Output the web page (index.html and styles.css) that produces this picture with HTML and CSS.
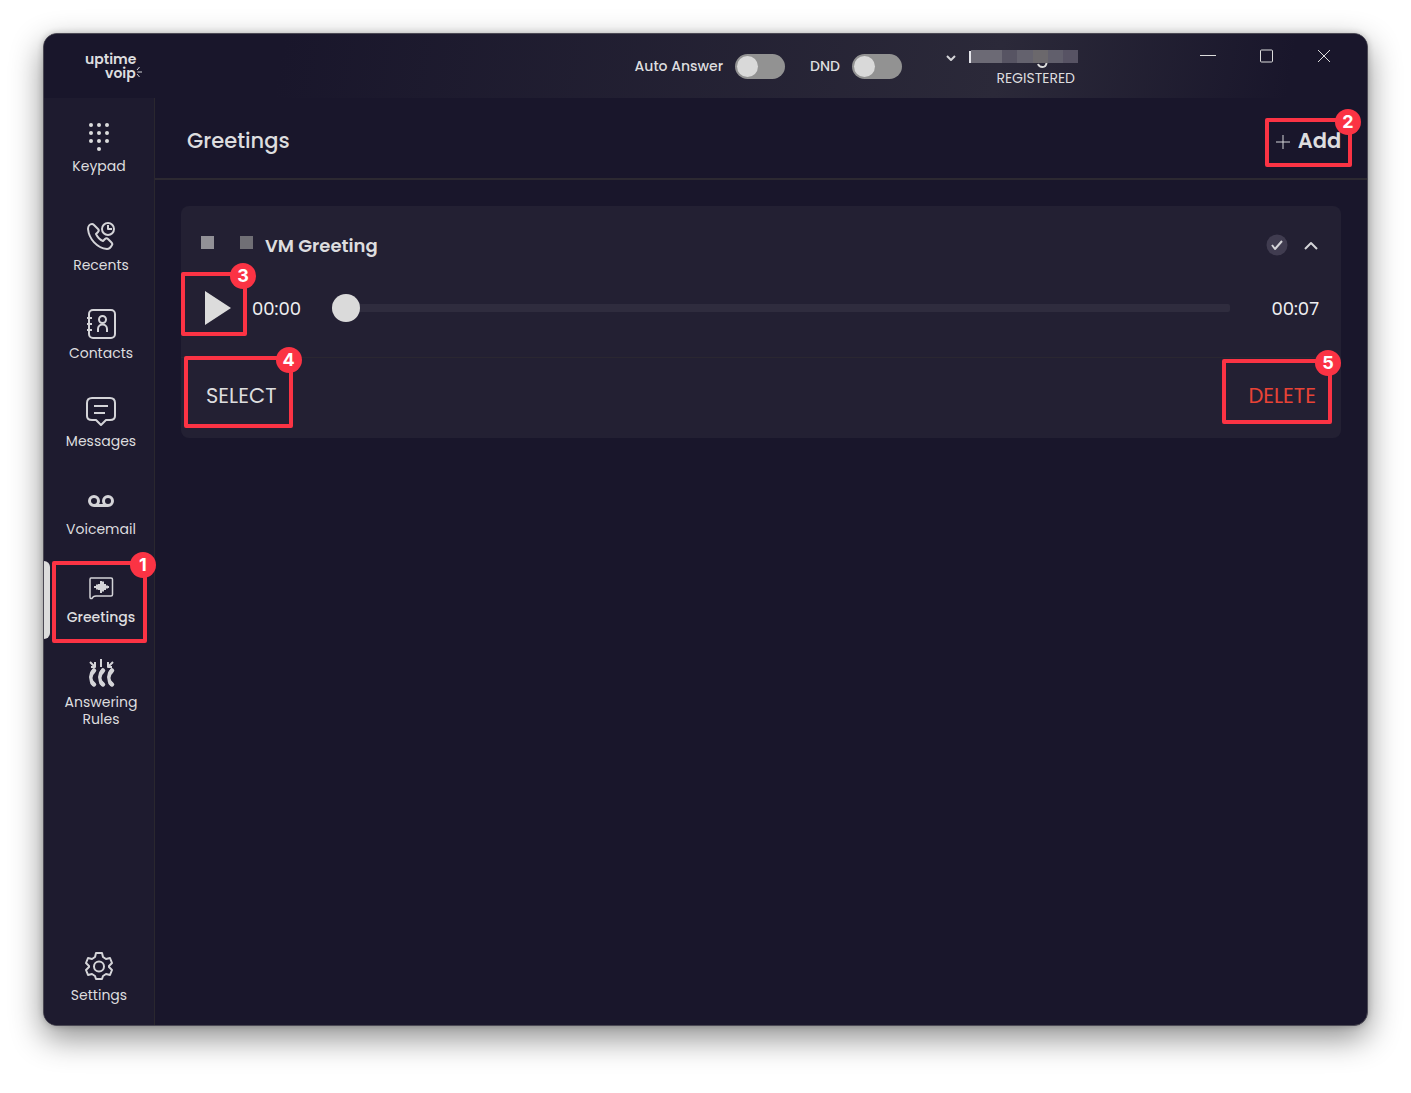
FILE: index.html
```html
<!DOCTYPE html>
<html lang="en">
<head>
    <meta charset="UTF-8">
    <meta name="viewport" content="width=device-width, initial-scale=1.0">
    <title>Greetings - uptime voip</title>
    <link rel="stylesheet" href="styles.css">
</head>
<body>
    <div class="window">
        <header class="titlebar">
            <div class="logo">
                <span>uptime</span>
                <span class="logo-second">voip<svg width="6" height="12" viewBox="0 0 6 12"><path d="M1 4L3.500 1M1.500 6H6M1 8L3.500 11" /></svg></span>
            </div>

            <div class="status">
                <label class="switch" for="auto-answer">Auto Answer <input type="checkbox" id="auto-answer"></label>
                <label class="switch" for="dnd">DND <input type="checkbox" id="dnd"></label>
                <button class="account" aria-label="Account">
                    <svg class="account-arrow" width="12" height="8" viewBox="0 0 12 8"><path d="M2 2l4 4 4-4" /></svg>
                    <span class="account-info">
                        <svg class="account-name" width="109" height="18" viewBox="0 0 109 18">
                            <path class="name-tail" d="M69 14q1 3 4.500 3t4-4" />
                            <rect x="0" y="1" width="2" height="12" fill="#e4e4ea" />
                            <rect x="2" width="31" height="13" fill="#6c6a75" />
                            <rect x="33" width="15" height="13" fill="#575463" />
                            <rect x="48" width="16" height="13" fill="#64626e" />
                            <rect x="64" width="15" height="13" fill="#6b686c" />
                            <rect x="79" width="15" height="13" fill="#615f6c" />
                            <rect x="94" width="15" height="13" fill="#575364" />
                        </svg>
                        <span>REGISTERED</span>
                    </span>
                </button>
            </div>

            <div class="window-controls">
                <button aria-label="Minimize"><svg width="16" height="16" viewBox="0 0 16 16"><path d="M0 7.500h16" /></svg></button>
                <button aria-label="Maximize"><svg width="16" height="16" viewBox="0 0 16 16"><rect x="2.500" y="2" width="12" height="12" rx="1" /></svg></button>
                <button aria-label="Close"><svg width="16" height="16" viewBox="0 0 16 16"><path d="M2 2l12 12M14 2L2 14" /></svg></button>
            </div>
        </header>

        <div class="content">
            <nav class="sidebar">
                <a class="nav-item" href="#keypad">
                    <svg class="icon-solid" width="32" height="32" viewBox="0 0 32 32">
                        <circle cx="8" cy="4" r="2" /><circle cx="16" cy="4" r="2" /><circle cx="24" cy="4" r="2" />
                        <circle cx="8" cy="12" r="2" /><circle cx="16" cy="12" r="2" /><circle cx="24" cy="12" r="2" />
                        <circle cx="8" cy="20" r="2" /><circle cx="16" cy="20" r="2" /><circle cx="24" cy="20" r="2" />
                        <circle cx="16" cy="28" r="2" />
                    </svg>
                    <span>Keypad</span>
                </a>

                <div class="nav-list">
                    <a class="nav-item" href="#recents">
                        <svg width="32" height="32" viewBox="0 0 32 32">
                            <path d="M7 4C5 4 3 6 3 9c1 10 9 19 19 20 2 0 4-2 5-4 1-1 0-2-1-3l-3-3c-1-1-2-1-3 0l-2 2c-3-1-6-5-7-7l2-2c1-1 1-2 0-3L9 5C8 4 8 4 7 4z" />
                            <circle cx="23" cy="9" r="6" />
                            <path d="M23 5v4h4" />
                        </svg>
                        <span>Recents</span>
                    </a>
                    <a class="nav-item" href="#contacts">
                        <svg width="32" height="32" viewBox="0 0 32 32">
                            <rect x="4" y="2" width="26" height="28" rx="4" />
                            <path d="M2 10h5M2 16h5M2 22h5" />
                            <circle cx="17.500" cy="11.500" r="3.500" />
                            <path d="M13 24v-3c0-6 9-6 9 0v3" />
                        </svg>
                        <span>Contacts</span>
                    </a>
                    <a class="nav-item" href="#messages">
                        <svg width="32" height="32" viewBox="0 0 32 32">
                            <path d="M7 2h18q5 0 5 5v13q0 4-5 4h-4l-5 5-5-5H7q-5 0-5-4V7q0-5 5-5z" />
                            <path d="M9 10h14M9 17h11" />
                        </svg>
                        <span>Messages</span>
                    </a>
                    <a class="nav-item" href="#voicemail">
                        <svg class="icon-bold" width="32" height="32" viewBox="0 0 32 32">
                            <circle cx="9" cy="17" r="4.500" />
                            <circle cx="23" cy="17" r="4.500" />
                            <path d="M9 21.500h14" />
                        </svg>
                        <span>Voicemail</span>
                    </a>
                    <a class="nav-item active" href="#greetings">
                        <svg width="32" height="32" viewBox="0 0 32 32">
                            <path stroke-width="1.500" d="M6 6h20q1.500 0 1.500 1.500v15q0 1.500-1.500 1.500H11q-3 0-4 2.500-2 .5-2-1.500V7.500Q5 6 6 6z" />
                            <path d="M9 15h2M12 12.500v5M14 12v6M16 9v12M18 9.500v10M20 12v6M22 13.500v3M22 15h2" />
                        </svg>
                        <span>Greetings</span>
                        <b class="callout">
                            <i class="callout-number">1</i>
                        </b>
                    </a>
                    <a class="nav-item" href="#rules">
                        <svg class="icon-bold" width="32" height="32" viewBox="0 0 32 32">
                            <g id="handset">
                                <path stroke-width="3.500" d="M9 13Q2.500 20.500 9 28" />
                                <path stroke-width="4.500" stroke-linecap="round" d="M9 13.500l-1.500 2M7.500 26l1.500 1.500" />
                            </g>
                            <use href="#handset" x="9" />
                            <use href="#handset" x="18" />
                            <path class="arrows" d="M5 5l5 5M10 5v5H6M16 2v8M28 5l-5 5M23 5v5h4" />
                        </svg>
                        <span>Answering Rules</span>
                    </a>
                </div>

                <a class="nav-item settings" href="#settings">
                    <svg width="32" height="32" viewBox="0 0 32 32">
                        <path d="M13 3h6l1 4 3 2 4-1 2 5-3 3v1l3 3-2 5-4-1-3 2-1 3h-6l-1-3-3-2-4 1-2-5 3-3v-1l-3-3 2-5 4 1 3-2z" />
                        <circle cx="16" cy="16.500" r="5" />
                    </svg>
                    <span>Settings</span>
                </a>
            </nav>

            <main class="main">
                <div class="page-header">
                    <h1>Greetings</h1>
                    <button class="add-button">
                        <svg width="14" height="14" viewBox="0 0 14 14"><path d="M7 0v14M0 7h14" /></svg>
                        Add
                        <b class="callout"><i class="callout-number">2</i></b>
                    </button>
                </div>

                <section class="greeting-card">
                    <div class="greeting-title">
                        <span class="block"></span>
                        <span class="block block-dark"></span>
                        <h2>VM Greeting</h2>
                        <svg class="check" width="22" height="22" viewBox="0 0 22 22">
                            <circle cx="11" cy="11" r="10.500" />
                            <path d="M6 11l3 4 7-8" />
                        </svg>
                        <button class="collapse" aria-label="Collapse">
                            <svg width="16" height="12" viewBox="0 0 16 12"><path d="M2 10l6-6 6 6" /></svg>
                        </button>
                    </div>

                    <div class="player">
                        <button class="play" aria-label="Play">
                            <svg width="26" height="34" viewBox="0 0 26 34"><path d="M0 0l26 17L0 34z" /></svg>
                            <b class="callout"><i class="callout-number">3</i></b>
                        </button>
                        <span class="time">00:00</span>
                        <input class="seek" type="range" min="0" max="7" value="0" aria-label="Position">
                        <span class="time">00:07</span>
                    </div>

                    <div class="greeting-actions">
                        <button class="select">SELECT
                            <b class="callout"><i class="callout-number">4</i></b>
                        </button>
                        <button class="delete">DELETE
                            <b class="callout"><i class="callout-number">5</i></b>
                        </button>
                    </div>
                </section>
            </main>
        </div>
    </div>
</body>
</html>
```
FILE: styles.css
```css
* {
    box-sizing: border-box;
}

body {
    font-family: Poppins, Inter, sans-serif;
    margin: 0;
    padding: 33px 43px 67px;
    background-color: #fff;
    color: #dddddf;
}

button {
    font-family: inherit;
    color: inherit;
    background: none;
    border: none;
    padding: 0;
    cursor: pointer;
}

svg {
    display: block;
    flex: none;
    fill: none;
    stroke: #d4d4d8;
    stroke-width: 2;
    stroke-linejoin: round;
}

.window {
    display: flex;
    flex-direction: column;
    min-height: calc(100vh - 100px);
    background-color: #19162b;
    border: 1px solid #4b4954;
    border-radius: 14px;
    overflow: hidden;
    box-shadow: 0 12px 32px rgba(0, 0, 0, 0.45), 0 0 6px rgba(0, 0, 0, 0.2);
}

/* title bar */

.titlebar {
    display: flex;
    height: 64px;
    padding-left: 41px;
    padding-right: 14px;
    background: linear-gradient(100deg, #19162b 18%, #2b2939 72%, #19162b 94%);
}

.logo {
    display: flex;
    flex-direction: column;
    padding-top: 18px;
    font-size: 14px;
    font-weight: 600;
    line-height: 14px;
}

.logo-second {
    display: flex;
    padding-left: 20px;
}

.logo svg {
    stroke-width: 1;
}

.status {
    display: flex;
    align-items: center;
    gap: 25px;
    margin-left: auto;
    margin-right: 101px;
}

.switch {
    display: flex;
    align-items: center;
    gap: 12px;
    font-size: 14px;
    font-weight: 500;
}

.switch input {
    appearance: none;
    display: flex;
    align-items: center;
    width: 50px;
    height: 25px;
    margin: 0;
    padding: 2px;
    border-radius: 13px;
    background-color: #929292;
}

.switch input::before {
    content: "";
    width: 21px;
    height: 21px;
    border-radius: 50%;
    background-color: #d9d9d9;
}

.switch input:checked {
    justify-content: flex-end;
}

.account {
    display: flex;
    gap: 12px;
    margin-left: 18px;
    padding-top: 5px;
    font-size: 14px;
}

.account-arrow {
    margin-top: 4px;
}

.account-info {
    display: flex;
    flex-direction: column;
    align-items: flex-end;
    padding-right: 3px;
}

.account-info span {
    line-height: 20px;
}

.account-name {
    margin-right: -3px;
    stroke: none;
}

.name-tail {
    stroke: #dcdcdc;
}

.window-controls {
    display: flex;
    align-items: flex-start;
}

.window-controls button {
    display: flex;
    justify-content: center;
    width: 58px;
    padding: 14px 0;
}

.window-controls svg {
    stroke: #dcdcdc;
    stroke-width: 1;
}

/* sidebar */

.content {
    display: flex;
    flex: 1;
}

.sidebar {
    display: flex;
    flex-direction: column;
    width: 111px;
    padding: 11px 0 7px;
    background-color: #1e1b2f;
    border-right: 1px solid #2a272f;
}

.nav-list {
    padding: 11px 0 0 4px;
}

.nav-item {
    position: relative;
    display: flex;
    flex-direction: column;
    align-items: center;
    gap: 5px;
    min-height: 88px;
    padding: 12px 15px 0;
    color: inherit;
    font-size: 14px;
    line-height: 17px;
    text-align: center;
    text-decoration: none;
}

.icon-solid {
    fill: #dcdcdc;
    stroke: none;
}

.icon-bold {
    stroke-width: 3;
}

.icon-bold .arrows {
    stroke-width: 2;
}

.settings {
    min-height: 80px;
    margin-top: auto;
}

.nav-item.active {
    min-height: 85px;
    font-weight: 500;
}

.nav-item.active::before {
    content: "";
    position: absolute;
    left: -4px;
    top: 1px;
    width: 6px;
    height: 78px;
    border-radius: 0 6px 6px 0;
    background-color: #dcdcdc;
}

/* numbered callouts */

.callout {
    position: absolute;
    inset: 0;
    border: 4px solid #fb3344;
    border-radius: 2px;
    pointer-events: none;
}

.callout-number {
    position: absolute;
    top: -13px;
    right: -13px;
    width: 26px;
    border-radius: 50%;
    background-color: #fb3344;
    color: #fff;
    font-family: Inter, sans-serif;
    font-size: 18px;
    font-style: normal;
    font-weight: 700;
    line-height: 26px;
    text-align: center;
}

.nav-item .callout {
    inset: 1px 7px 2px 4px;
}

/* greetings page */

.main {
    flex: 1;
}

.page-header {
    display: flex;
    align-items: center;
    justify-content: space-between;
    height: 82px;
    padding: 4px 15px 0 32px;
    border-bottom: 2px solid #2c2931;
}

h1,
h2 {
    margin: 0;
    font-size: 21px;
    font-weight: 500;
}

.add-button {
    position: relative;
    display: flex;
    align-items: center;
    justify-content: center;
    gap: 8px;
    width: 87px;
    height: 49px;
    font-size: 21px;
    font-weight: 600;
}

.add-button svg {
    margin-top: 3px;
}

.add-button path {
    stroke-width: 1;
}

.add-button .callout {
    inset: 2px 0 -2px;
}

.greeting-card {
    margin: 26px;
    border-radius: 8px;
    background-color: #232033;
}

.greeting-title {
    display: flex;
    align-items: center;
    height: 78px;
    padding: 0 22px 0 20px;
}

.block {
    width: 13px;
    height: 13px;
    margin-bottom: 6px;
    background-color: #929197;
}

.block-dark {
    margin-left: 26px;
    background-color: #706f75;
}

h2 {
    margin-left: 12px;
    font-size: 18px;
    font-weight: 600;
}

.check {
    margin-left: auto;
}

.check circle {
    fill: #403c50;
    stroke: none;
}

.collapse {
    margin-left: 15px;
}

.player {
    display: flex;
    align-items: center;
    height: 74px;
    padding: 0 22px 25px 0;
    border-bottom: 1px solid #2a2731;
}

.play {
    position: relative;
    display: flex;
    align-items: center;
    width: 66px;
    height: 64px;
    padding-left: 24px;
}

.play svg {
    fill: #dcdcdc;
    stroke: none;
}

.play .callout {
    inset: -4px 0 4px;
}

.time {
    flex: none;
    margin-left: 5px;
    color: #efeff1;
    font-size: 18px;
}

.seek {
    appearance: none;
    flex: 1;
    min-width: 0;
    height: 28px;
    margin: 0 36px 0 31px;
    background: none;
}

.seek::-webkit-slider-runnable-track {
    height: 8px;
    border-radius: 2px;
    background-color: #2f2c3e;
}

.seek::-webkit-slider-thumb {
    appearance: none;
    width: 28px;
    height: 28px;
    margin-top: -10px;
    border-radius: 50%;
    background-color: #dadada;
}

.greeting-actions {
    display: flex;
    justify-content: space-between;
    height: 80px;
    padding: 0 9px 0 3px;
}

.greeting-actions button {
    position: relative;
    height: 74px;
    padding: 0 16px 0 22px;
    font-size: 21px;
}

.greeting-actions .delete {
    padding-left: 26px;
    color: #e94336;
}

.select .callout {
    inset: -2px 0 4px;
}

.delete .callout {
    inset: 1px 0 8px;
}
```
